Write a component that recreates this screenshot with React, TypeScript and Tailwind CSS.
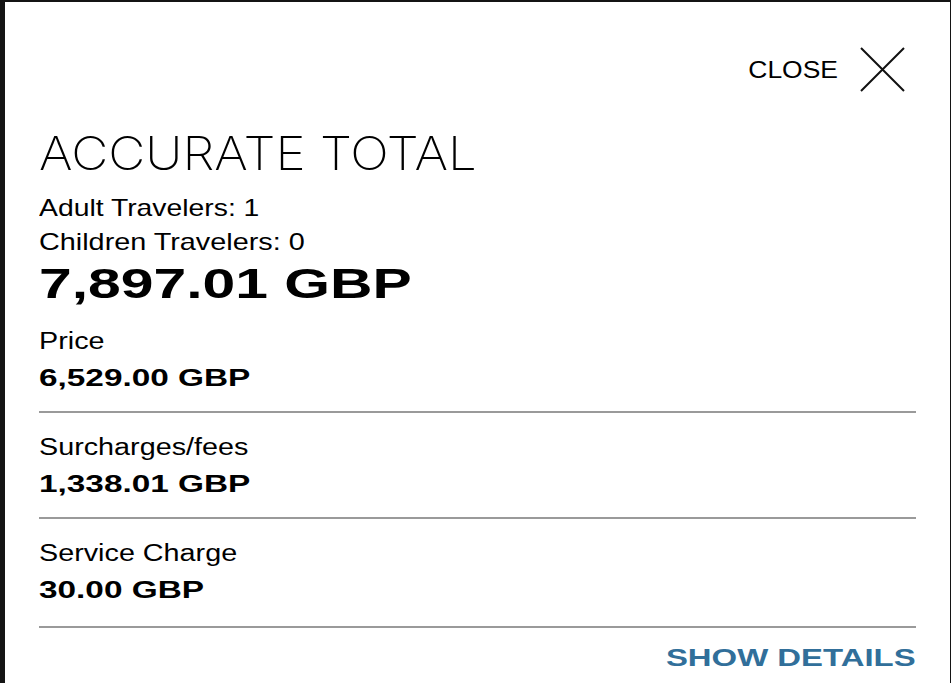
import React from "react";

const rows = [
  { label: "Price", value: "6,529.00 GBP", pb: "pb-[18px]" },
  { label: "Surcharges/fees", value: "1,338.01 GBP", pb: "pb-[18px]" },
  { label: "Service Charge", value: "30.00 GBP", pb: "pb-[21px]" },
];

const CloseIcon = () => (
  <svg width="45" height="45" viewBox="0 0 45 45" fill="none">
    <path d="M1 1 L44 44 M44 1 L1 44" stroke="#111" strokeWidth="2" />
  </svg>
);

const App = () => {
  return (
    <div
      className="w-[951px] h-[683px] overflow-hidden bg-white border-l-[5px] border-t-2 border-r border-[#141414] px-[34px] pt-[45px] text-black"
      style={{ fontFamily: '"Liberation Sans", Arial, sans-serif' }}
    >
      <div className="flex items-center justify-end pr-[11px]">
        <span className="inline-block origin-right scale-x-[1.15] text-[23px] leading-[30px] mr-[22px]">
          CLOSE
        </span>
        <CloseIcon />
      </div>

      <h1
        className="mt-[38px] text-[46px] leading-[46px] font-extralight"
        style={{ fontFamily: "Inter, sans-serif" }}
      >
        <span className="inline-block origin-left scale-x-[1.11]">ACCURATE TOTAL</span>
      </h1>

      <div className="mt-[15px]">
        <p className="text-[24px] leading-[34px]">
          <span className="inline-block origin-left scale-x-[1.18]">Adult Travelers: 1</span>
        </p>
        <p className="text-[24px] leading-[34px]">
          <span className="inline-block origin-left scale-x-[1.2]">Children Travelers: 0</span>
        </p>
      </div>

      <div className="mt-[4px] text-[42px] leading-[42px] font-bold">
        <span className="inline-block origin-left scale-x-[1.4]">7,897.01 GBP</span>
      </div>

      <div className="mt-[2px]">
        {rows.map((r) => (
          <div key={r.label} className={`border-b-2 border-[#9a9a9a] pt-[19px] ${r.pb}`}>
            <div className="text-[23px] leading-[30px]">
              <span className="inline-block origin-left scale-x-[1.25]">{r.label}</span>
            </div>
            <div className="mt-[7px] text-[23px] leading-[30px] font-bold">
              <span className="inline-block origin-left scale-x-[1.45]">{r.value}</span>
            </div>
          </div>
        ))}
      </div>

      <div className="mt-[15px] flex justify-end">
        <button className="inline-block origin-right scale-x-[1.43] text-[23px] leading-[30px] font-bold text-[#316f9a]">
          SHOW DETAILS
        </button>
      </div>
    </div>
  );
};

export default App;
